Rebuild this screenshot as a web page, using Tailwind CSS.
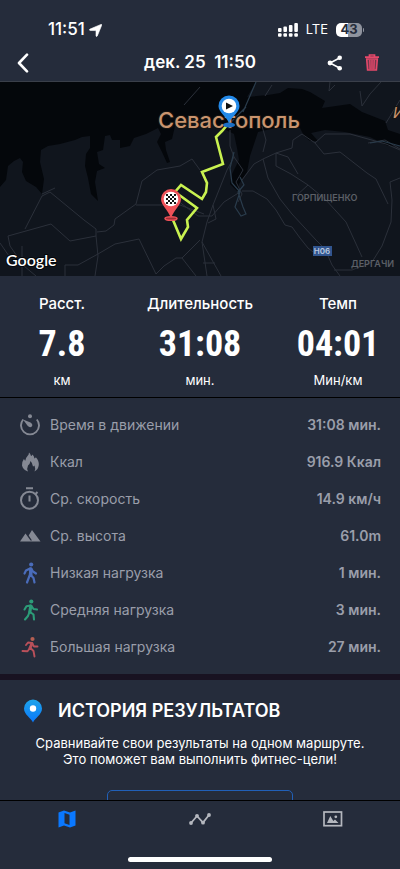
<!DOCTYPE html>
<html lang="ru">
<head>
<meta charset="utf-8">
<meta name="viewport" content="width=device-width, initial-scale=1">
<title>Тренировка</title>
<script src="https://cdn.jsdelivr.net/npm/@tailwindcss/browser@4"></script>
</head>
<body class="flex h-dvh flex-col overflow-hidden bg-[#252c3b] font-['Inter','Noto_Sans',sans-serif] text-white">

<header class="shrink-0 border-b border-[#3a3f4a]">
  <div class="flex h-11 items-end justify-between pr-9 pl-12">
    <div class="flex h-7 items-center gap-1">
      <span class="text-[17px] font-medium">11:51</span>
      <svg class="h-[13px] w-[13px]" viewBox="0 0 13 13" fill="#fff" aria-hidden="true"><path d="M12 .4Q13 .1 12.700 1.200L8.300 12Q7.500 13.300 7 12V6.600L1.200 6.500Q-.3 6.100 1 5.100Z" stroke="#fff" stroke-width=".6"/></svg>
    </div>
    <div class="flex h-7 items-center gap-2">
      <svg class="h-[14px] w-5" viewBox="0 0 20 14" fill="#fff" aria-hidden="true">
        <g><rect x="0" y="5" width="3.600" height="4" rx="1"/><rect x="5.400" y="3.500" width="3.600" height="5.500" rx="1"/><rect x="10.900" y="2" width="3.600" height="7" rx="1"/><rect x="16.300" y="0" width="3.600" height="9" rx="1"/></g>
        <g><rect x="0" y="10.300" width="3.600" height="3.500" rx="1"/><rect x="5.400" y="10.300" width="3.600" height="3.500" rx="1"/><rect x="10.900" y="10.300" width="3.600" height="3.500" rx="1"/><rect x="16.300" y="10.300" width="3.600" height="3.500" rx="1"/></g>
      </svg>
      <span class="text-[13px]">LTE</span>
      <span class="flex items-center gap-px">
        <span class="flex h-[14px] w-[26px] items-center justify-center rounded-[5px] bg-linear-to-r from-white from-45% to-[#8f939d] to-45% text-[13px] font-bold text-[#252c3b]">43</span>
        <span class="h-1 w-px rounded-r bg-[#8f939d]"></span>
      </span>
    </div>
  </div>
  <div class="grid h-[37px] grid-cols-[1fr_auto_1fr] items-center">
    <button type="button" aria-label="Назад" class="ml-4 flex h-8 w-4 items-center">
      <svg class="h-5 w-4" viewBox="0 0 16 20" fill="none" stroke="#fff" stroke-width="2.600" stroke-linecap="round" stroke-linejoin="round"><path d="M11 1.700L3 10l8 8.300"/></svg>
    </button>
    <h1 class="text-[17px] font-semibold whitespace-pre">дек. 25  11:50</h1>
    <div class="flex items-center justify-end gap-[21px] pr-5">
      <button type="button" aria-label="Поделиться">
        <svg class="h-4 w-4" viewBox="0 0 16 16" aria-hidden="true"><path d="M13 2.700L3 8l10 5.300" fill="none" stroke="#fff" stroke-width="1.600"/><g fill="#fff"><circle cx="12.700" cy="2.800" r="2.300"/><circle cx="3" cy="8" r="2.400"/><circle cx="12.700" cy="13.200" r="2.300"/></g></svg>
      </button>
      <button type="button" aria-label="Удалить">
        <svg class="h-[17px] w-4" viewBox="0 0 16 17" fill="none" stroke="#e5486a" aria-hidden="true"><path d="M1 3.200h14M5.500 3V1h5v2" stroke-width="1.700"/><path d="M2.700 5l.9 11h8.800l.9-11z" stroke-width="1.600" fill="#e5486a" fill-opacity=".4"/><path d="M5.800 6l.3 9M8 6v9M10.200 6l-.3 9" stroke-width="1.400"/></svg>
      </button>
    </div>
  </div>
</header>

<main class="min-h-0 flex-1 overflow-hidden">
  <svg class="block h-[194px] w-full" viewBox="0 0 400 194" preserveAspectRatio="xMidYMid slice" role="img" aria-label="Карта маршрута">
    <rect width="400" height="194" fill="#04070b"/>
    <g fill="#10151d">
      <path d="M0 105L6 98L8 84L14 79L20 76L23 80L22 90L26 99L36 105L42 112L44 97L40 80L41 68L48 64L60 62L75 58L82 55L90 54L90 66L86 72L85 84L88 96L91 112L98 119L95 100L97 89L105 86L99 82L97 70L103 68L105 54L110 53L112 58L120 58V66L130 64L134 56L146 52L158 46L161 52L157 60L162 70L167 81L170 80L166 68L165 60L172 57L175 44L185 35L210 40L226 48L234 52L237 66L239 78L232 92L230 102L238 110L239 102L247 90L250 74L254 62L258 50L275 46L300 46L304 54L310 59L318 59L311 51L325 48L345 50L370 55L388 64L400 63V194H0Z"/>
      <path d="M256 0L247 15L268 13L280 11L288 6L302 7L310 10L325 19L322 26L350 22L362 30L385 39L388 48L400 52V0Z"/>
    </g>
    <g fill="none" stroke="#2b303a" stroke-linejoin="round">
      <path d="M25 147L42 114L50 110L84 138L96 147L96 154L70 159L51 142L8 154L10 164L24 184L36 194M22 164V194M96 154L98 174L95 194M65 194V183L78 183L98 172L115 162L139 157L156 192L164 184L176 176L182 176L196 194M182 176L200 158M97 150L106 149L114 143L115 137L136 122L142 99L157 88L180 84L192 77L200 88M136 123L180 123L204 132"/>
      <path d="M42 112L55 106M0 161L9 174M178 119L198 134L212 134L224 120L240 110M230 48V64L234 75L227 88L213 123L207 140L202 160L207 194M213 123L216 137L208 141M202 160L221 194M203 181H215M234 75L243 88L236 100L242 112L238 120M242 109L253 109L267 117L276 128L285 143L292 145L300 156L308 166L318 174M242 98L254 82L263 77L276 71L292 66L293 58L302 52L315 61L324 72L340 70L367 91L376 97L388 122M263 77L268 96L280 117L292 132L316 158L325 167L332 183L340 194M276 71V84L291 92L308 103L325 117L346 140L362 175M308 103L296 114M276 71L288 75L298 92M315 61L325 52L350 52L386 62L400 68M400 96L390 100L392 118L391 140L382 164L372 180L352 188H334M262 44L266 58L263 70M381 0L370 12L362 24L360 9M272 3L265 14M330 0L329 9L335 3M368 61L385 58L400 67M386 41L400 18M184 23L200 5"/>
    </g>
    <g fill="none" stroke="#2a3c4c" stroke-width="1.200"><path d="M234 70L230 86L232 101L240 110L235 125L241 134L246 132L243 125L238 110L244 103L240 95M243 30L256 0M229 42L246 25M370 61L382 59L400 64"/></g>
    <g font-family="Inter, 'Noto Sans', sans-serif">
      <g fill="#c9946f" stroke="#171411" stroke-width="2" paint-order="stroke"><text x="158" y="46" font-size="22" font-weight="500">Севастополь</text><text x="393" y="36" font-size="15" font-style="italic">И</text></g>
      <g fill="#5b5f66" font-size="9" font-weight="600"><text x="292" y="119">ГОРПИЩЕНКО</text><text x="351" y="185">ДЕРГАЧИ</text></g>
      <rect x="313" y="164" width="19" height="10" fill="#31558f"/>
      <text x="322" y="172" font-size="8" font-weight="600" fill="#b9c8df" text-anchor="middle">H06</text>
    </g>
    <path d="M228 42L222 49L216 55L223 82L202 90L207 101L206 110L202 117L181 103L175 110L182 115L197 126L187 138L188 145L181 157L173 138" fill="none" stroke="#c9f250" stroke-width="2.600"/>
    <ellipse cx="229" cy="43" rx="6" ry="2.400" fill="#1b6fc4"/>
    <path d="M229 41C226 34 218.500 30 218.500 24A10.300 10.300 0 0 1 239.500 24C239.500 30 232 34 229 41Z" fill="#2489e8"/>
    <circle cx="229" cy="24" r="7.300" fill="#fff"/><path d="M226 20.500V27.500L233 24Z" fill="#111"/>
    <ellipse cx="171" cy="136.500" rx="6" ry="1.800" fill="#9f2e35" stroke="#ee5158" stroke-width="1.500"/>
    <path d="M171 136C168 128 161 123 161 117A10 10 0 0 1 181 117C181 123 174 128 171 136Z" fill="#ee5158"/>
    <circle cx="171" cy="117" r="7.300" fill="#fff"/>
    <path d="M166 112h2v2h-2zM170 112h2v2h-2zM174 112h2v2h-2zM168 114h2v2h-2zM172 114h2v2h-2zM166 116h2v2h-2zM170 116h2v2h-2zM174 116h2v2h-2zM168 118h2v2h-2zM172 118h2v2h-2zM166 120h2v2h-2zM170 120h2v2h-2zM174 120h2v2h-2z" fill="#111"/>
    <text x="6" y="184" font-family="Lato, sans-serif" font-size="16" font-weight="600" fill="#fff" stroke="#04070b" stroke-width="2" paint-order="stroke">Google</text>
  </svg>

  <section class="grid grid-cols-[124px_1fr_124px] border-b border-black pt-4 pb-2 text-center">
    <div>
      <h2 class="text-[15px] leading-6 font-medium">Расст.</h2>
      <p class="font-['Roboto_Condensed','Roboto',sans-serif] text-4xl leading-[56px] font-bold">7.8</p>
      <p class="text-[13px] leading-[17px]">км</p>
    </div>
    <div>
      <h2 class="text-[15px] leading-6 font-medium">Длительность</h2>
      <p class="font-['Roboto_Condensed','Roboto',sans-serif] text-4xl leading-[56px] font-bold">31:08</p>
      <p class="text-[13px] leading-[17px]">мин.</p>
    </div>
    <div>
      <h2 class="text-[15px] leading-6 font-medium">Темп</h2>
      <p class="font-['Roboto_Condensed','Roboto',sans-serif] text-4xl leading-[56px] font-bold">04:01</p>
      <p class="text-[13px] leading-[17px]">Мин/км</p>
    </div>
  </section>

  <dl class="border-b-6 border-[#181221] pt-2 pr-[19px] pb-[9px] pl-5 text-sm text-[#9a9eaa]">
    <div class="flex h-[37px] items-center">
      <svg class="mr-[9px] h-[22px] w-[21px] shrink-0" viewBox="0 0 21 22" fill="none" stroke="#858994" stroke-width="1.900" aria-hidden="true"><path d="M3.200 5.500A9 9 0 1 0 16.800 5.500"/><path d="M3 5.500L10.500 8.500Q13.300 10.500 11.800 12.600Q9.700 14.200 7.600 11.800Z" fill="#858994" stroke="none"/><circle cx="10" cy="2.300" r="2" fill="#858994" stroke="none"/></svg>
      <dt class="flex-1">Время в движении</dt><dd class="font-semibold">31:08 мин.</dd>
    </div>
    <div class="flex h-[37px] items-center">
      <svg class="mr-[9px] h-[22px] w-[21px] shrink-0" viewBox="0 0 21 22" fill="#858994" aria-hidden="true"><path d="M9 1.500Q10.500 2.500 11 5Q12.200 4.800 12.500 3.500Q14 5 14.500 7.500Q15.500 7.300 15.800 6.300Q19.200 10 18.800 14Q18.300 18.500 14.500 20.500Q15.800 17.500 14.500 14.500Q13.500 15.500 13 15.500Q12.500 12 10.500 10Q10 13 8 14.500Q6.500 17.500 8 20.500Q3 18.800 2 14.500Q1.700 11 4 7.800Q4.300 9.500 5.300 9.800Q5.500 7 7.500 5Q9 3.500 9 1.500Z"/></svg>
      <dt class="flex-1">Ккал</dt><dd class="font-semibold">916.9 Ккал</dd>
    </div>
    <div class="flex h-[37px] items-center">
      <svg class="mr-[9px] h-[23px] w-[21px] shrink-0" viewBox="0 0 21 23" fill="none" stroke="#858994" stroke-width="2" aria-hidden="true"><circle cx="9.500" cy="13.300" r="8.500"/><path d="M6 1.300h7M9.500 8.500v6M15.500 7l2-2" /></svg>
      <dt class="flex-1">Ср. скорость</dt><dd class="font-semibold">14.9 км/ч</dd>
    </div>
    <div class="flex h-[37px] items-center">
      <svg class="mr-[9px] h-[22px] w-[21px] shrink-0" viewBox="0 0 21 22" fill="#858994" aria-hidden="true"><path d="M0 16.500L5.500 8.500L8 12L10.500 15.500H12L8.700 10.500L12 5L20.500 16.500Z"/></svg>
      <dt class="flex-1">Ср. высота</dt><dd class="font-semibold">61.0m</dd>
    </div>
    <div class="flex h-[37px] items-center">
      <svg class="mr-[9px] h-[22px] w-[21px] shrink-0" viewBox="0 0 21 22" fill="none" stroke="#4a6cba" stroke-width="2.200" stroke-linecap="round" stroke-linejoin="round" aria-hidden="true"><circle cx="11.200" cy="2.500" r="2.100" fill="#4a6cba" stroke="none"/><path d="M10.500 6.500L9.800 13M10 6.500L6 8.500L4.500 11.500M11.500 7L13 9.500L16 11.500M9.800 13L7 20.500M10.800 13L13.500 16L14.500 20.500"/><path d="M10.800 7V13" stroke-width="3.400"/></svg>
      <dt class="flex-1">Низкая нагрузка</dt><dd class="font-semibold">1 мин.</dd>
    </div>
    <div class="flex h-[37px] items-center">
      <svg class="mr-[9px] h-[22px] w-[21px] shrink-0" viewBox="0 0 21 22" fill="none" stroke="#2c9c78" stroke-width="2.100" stroke-linecap="round" stroke-linejoin="round" aria-hidden="true"><circle cx="11.300" cy="2.500" r="2.100" fill="#2c9c78" stroke="none"/><path d="M10.500 6.500L6.500 7.200L4.500 10.500M11.500 7L13.500 10L17 10.500M9.500 13L8 17L5 20.500M10 13L13.500 15.500L14 20.500"/><path d="M10.800 7L9.800 13" stroke-width="3.200"/></svg>
      <dt class="flex-1">Средняя нагрузка</dt><dd class="font-semibold">3 мин.</dd>
    </div>
    <div class="flex h-[37px] items-center">
      <svg class="mr-[9px] h-[22px] w-[21px] shrink-0" viewBox="0 0 21 22" fill="none" stroke="#b9505a" stroke-width="1.900" stroke-linecap="round" stroke-linejoin="round" aria-hidden="true"><circle cx="12.500" cy="3" r="2.100" fill="#b55f52" stroke="none"/><path d="M12 7L8 6.500L6 9M12.500 8L14 10.500H17.500M10 12L7.500 15.300L2.500 15M10.500 12L13.500 15L14.500 20.500"/><path d="M12 7.500L10 12" stroke-width="3"/></svg>
      <dt class="flex-1">Большая нагрузка</dt><dd class="font-semibold">27 мин.</dd>
    </div>
  </dl>

  <section class="pt-[17px]">
    <div class="flex items-center pl-6">
      <svg class="mr-4 h-6 w-[18px]" viewBox="0 0 18 24" aria-hidden="true"><defs><linearGradient id="pin" x1="0" y1="0" x2="0" y2="1"><stop offset="0" stop-color="#1ea4ea"/><stop offset="1" stop-color="#0a78fa"/></linearGradient></defs><path d="M9 23.500C7 19 0 15.500 0 9.500A9 9 0 0 1 18 9.500C18 15.500 11 19 9 23.500Z" fill="url(#pin)"/><circle cx="9" cy="9.500" r="3.200" fill="#fff"/></svg>
      <h2 class="text-lg leading-7 font-semibold">ИСТОРИЯ РЕЗУЛЬТАТОВ</h2>
    </div>
    <p class="mt-[10px] text-center text-[13px] leading-4">Сравнивайте свои результаты на одном маршруте.<br>Это поможет вам выполнить фитнес-цели!</p>
    <button type="button" aria-label="Показать историю" class="mx-auto mt-[23px] block h-11 w-[186px] rounded-[5px] border border-[#2160b8]"></button>
  </section>
</main>

<nav class="shrink-0 border-t border-black bg-[#252c3b]">
  <div class="grid h-9 grid-cols-3">
    <a href="#map" aria-label="Карта" class="flex items-center justify-center"><svg class="h-[18px] w-[18px]" viewBox="0 0 18 18" aria-hidden="true"><path d="M.5 2.500L6 .5L12 2.500L17.500 .5V15.500L12 17.500L6 15.500L.5 17.500Z" fill="#0a78ff"/><path d="M6.500 3L11.500 4.700V15L6.500 13.300Z" fill="#252c3b"/></svg></a>
    <a href="#charts" aria-label="Графики" class="flex items-center justify-center"><svg class="h-3 w-[22px]" viewBox="0 0 22 12" fill="#b4b7be" aria-hidden="true"><path d="M2 10L8 3L14 9.500L20 2" fill="none" stroke="#b4b7be" stroke-width="1.800"/><circle cx="2" cy="10" r="1.900"/><circle cx="8" cy="2.800" r="1.900"/><circle cx="14" cy="9.700" r="1.900"/><circle cx="20" cy="2" r="1.900"/></svg></a>
    <a href="#photos" aria-label="Фото" class="flex items-center justify-center"><svg class="h-4 w-5" viewBox="0 0 20 16" aria-hidden="true"><rect x="1" y="1" width="17.500" height="13.700" fill="none" stroke="#b4b7be" stroke-width="1.700"/><path d="M4 12L7.300 5L10.300 10L12 8.500L15.500 12Z" fill="#b4b7be"/><circle cx="12.800" cy="5.800" r="1.400" fill="#b4b7be"/></svg></a>
  </div>
  <div class="flex h-8 items-end justify-center pb-[7px]"><span class="h-[5px] w-36 rounded-full bg-white"></span></div>
</nav>
</body>
</html>
